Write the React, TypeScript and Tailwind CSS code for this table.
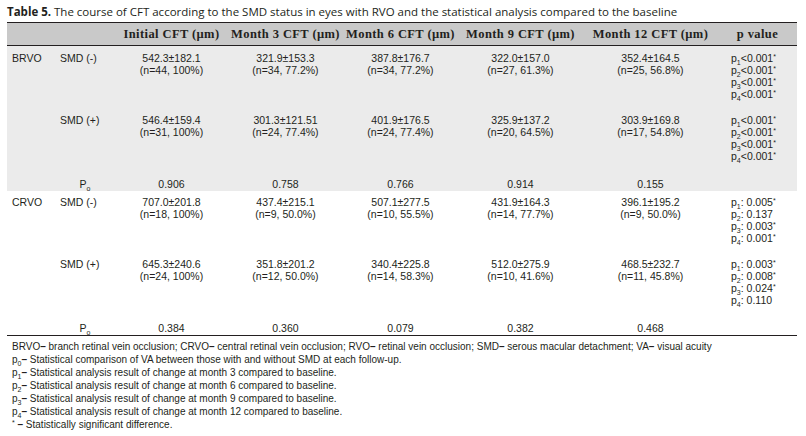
import React from "react";

type Cell = { v: string; n: string };

type Block = {
  group: string;
  shaded: boolean;
  rows: { label: string; cells: Cell[]; p: { i: string; val: string; star: boolean }[] }[];
  p0: string[];
};

const cols = "grid grid-cols-[48px_60px_113px_115px_115px_125px_135px_79px]";

const blocks: Block[] = [
  {
    group: "BRVO",
    shaded: true,
    rows: [
      {
        label: "SMD (-)",
        cells: [
          { v: "542.3±182.1", n: "(n=44, 100%)" },
          { v: "321.9±153.3", n: "(n=34, 77.2%)" },
          { v: "387.8±176.7", n: "(n=34, 77.2%)" },
          { v: "322.0±157.0", n: "(n=27, 61.3%)" },
          { v: "352.4±164.5", n: "(n=25, 56.8%)" },
        ],
        p: [
          { i: "1", val: "<0.001", star: true },
          { i: "2", val: "<0.001", star: true },
          { i: "3", val: "<0.001", star: true },
          { i: "4", val: "<0.001", star: true },
        ],
      },
      {
        label: "SMD (+)",
        cells: [
          { v: "546.4±159.4", n: "(n=31, 100%)" },
          { v: "301.3±121.51", n: "(n=24, 77.4%)" },
          { v: "401.9±176.5", n: "(n=24, 77.4%)" },
          { v: "325.9±137.2", n: "(n=20, 64.5%)" },
          { v: "303.9±169.8", n: "(n=17, 54.8%)" },
        ],
        p: [
          { i: "1", val: "<0.001", star: true },
          { i: "2", val: "<0.001", star: true },
          { i: "3", val: "<0.001", star: true },
          { i: "4", val: "<0.001", star: true },
        ],
      },
    ],
    p0: ["0.906", "0.758", "0.766", "0.914", "0.155"],
  },
  {
    group: "CRVO",
    shaded: false,
    rows: [
      {
        label: "SMD (-)",
        cells: [
          { v: "707.0±201.8", n: "(n=18, 100%)" },
          { v: "437.4±215.1", n: "(n=9, 50.0%)" },
          { v: "507.1±277.5", n: "(n=10, 55.5%)" },
          { v: "431.9±164.3", n: "(n=14, 77.7%)" },
          { v: "396.1±195.2", n: "(n=9, 50.0%)" },
        ],
        p: [
          { i: "1", val: ": 0.005", star: true },
          { i: "2", val: ": 0.137", star: false },
          { i: "3", val: ": 0.003", star: true },
          { i: "4", val: ": 0.001", star: true },
        ],
      },
      {
        label: "SMD (+)",
        cells: [
          { v: "645.3±240.6", n: "(n=24, 100%)" },
          { v: "351.8±201.2", n: "(n=12, 50.0%)" },
          { v: "340.4±225.8", n: "(n=14, 58.3%)" },
          { v: "512.0±275.9", n: "(n=10, 41.6%)" },
          { v: "468.5±232.7", n: "(n=11, 45.8%)" },
        ],
        p: [
          { i: "1", val: ": 0.003", star: true },
          { i: "2", val: ": 0.008", star: true },
          { i: "3", val: ": 0.024", star: true },
          { i: "4", val: ": 0.110", star: false },
        ],
      },
    ],
    p0: ["0.384", "0.360", "0.079", "0.382", "0.468"],
  },
];

const headers = [
  "Initial CFT (µm)",
  "Month 3 CFT (µm)",
  "Month 6 CFT (µm)",
  "Month 9 CFT (µm)",
  "Month 12 CFT (µm)",
];

const notes = [
  { i: "0", t: "Statistical comparison of VA between those with and without SMD at each follow-up." },
  { i: "1", t: "Statistical analysis result of change at month 3 compared to baseline." },
  { i: "2", t: "Statistical analysis result of change at month 6 compared to baseline." },
  { i: "3", t: "Statistical analysis result of change at month 9 compared to baseline." },
  { i: "4", t: "Statistical analysis result of change at month 12 compared to baseline." },
];

function Sub({ children }: { children: React.ReactNode }) {
  return <span className="relative top-[3px] text-[7px] leading-none">{children}</span>;
}

function Star() {
  return <span className="relative -top-[3px] text-[7px] leading-none">*</span>;
}

function Dash() {
  return <span className="font-bold">–</span>;
}

export default function App() {
  return (
    <div className="w-[806px] h-[436px] bg-white text-[#231f20] font-['Liberation_Sans',Arial,sans-serif] overflow-hidden">
      {/* Caption */}
      <div className="h-[22px] pl-[7px] pt-[5px] text-[11.5px] leading-[14px] font-['Open_Sans',sans-serif] whitespace-nowrap">
        <span className="font-bold">Table 5.</span> The course of CFT according to the SMD status in eyes with RVO and the
        statistical analysis compared to the baseline
      </div>

      <div className="mx-[7px] w-[790px]">
        {/* Header */}
        <div className={`${cols} h-[24px] items-center border-y border-[#231f20] bg-[#c9c9c9] font-['Liberation_Serif',serif] font-bold text-[12.5px] tracking-[0.4px]`}>
          <div />
          <div />
          {headers.map((h) => (
            <div key={h} className="text-center">
              {h}
            </div>
          ))}
          <div className="text-center">p value</div>
        </div>

        {blocks.map((b) => (
          <div
            key={b.group}
            className={`text-[10.5px] leading-[12px] h-[145px] ${b.shaded ? "bg-[#ebebeb] pt-[6px]" : "pt-[5px] border-b border-[#231f20]"}`}
          >
            {b.rows.map((r, ri) => (
              <div key={r.label} className={`${cols} h-[62px]`}>
                <div className="pl-[5px]">{ri === 0 ? b.group : ""}</div>
                <div className="pl-[5px]">{r.label}</div>
                {r.cells.map((c) => (
                  <div key={c.v} className="text-center">
                    <div>{c.v}</div>
                    <div>{c.n}</div>
                  </div>
                ))}
                <div className="pl-[13px]">
                  {r.p.map((p) => (
                    <div key={p.i}>
                      p<Sub>{p.i}</Sub>
                      {p.val}
                      {p.star && <Star />}
                    </div>
                  ))}
                </div>
              </div>
            ))}
            <div className={`${cols} pt-[2px]`}>
              <div />
              <div className="text-center">
                P<Sub>o</Sub>
              </div>
              {b.p0.map((v, i) => (
                <div key={i} className="text-center">
                  {v}
                </div>
              ))}
              <div />
            </div>
          </div>
        ))}

        {/* Footnotes */}
        <div className="pt-[4px] pl-[5px] text-[10px] leading-[13px] whitespace-nowrap">
          <div>
            BRVO<Dash /> branch retinal vein occlusion; CRVO<Dash /> central retinal vein occlusion; RVO<Dash /> retinal vein
            occlusion; SMD<Dash /> serous macular detachment; VA<Dash /> visual acuity
          </div>
          {notes.map((n) => (
            <div key={n.i}>
              p<Sub>{n.i}</Sub>
              <Dash /> {n.t}
            </div>
          ))}
          <div>
            <Star /> <Dash /> Statistically significant difference.
          </div>
        </div>
      </div>
    </div>
  );
}
